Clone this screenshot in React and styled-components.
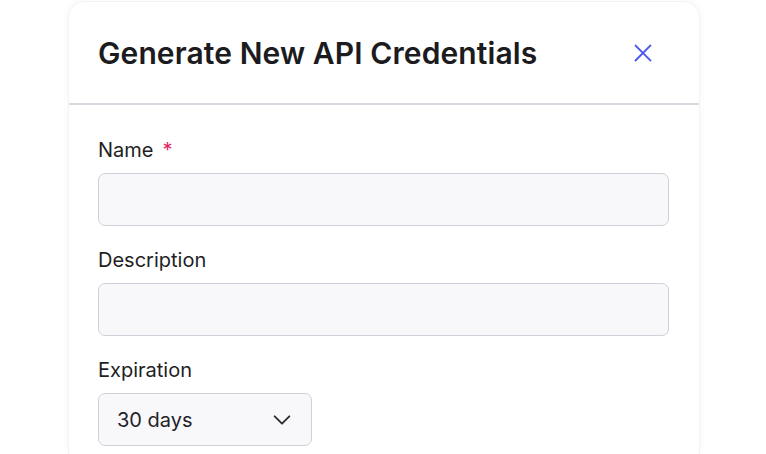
import React from "react";
import styled, { createGlobalStyle } from "styled-components";

const Global = createGlobalStyle`
  html, body { margin: 0; padding: 0; background: #ffffff; }
  body { font-family: Inter, "Noto Sans", sans-serif; -webkit-font-smoothing: antialiased; }
  * { box-sizing: border-box; }
`;

const Page = styled.div`
  display: flex;
  padding: 1px 0 0 68px;
  height: 454px;
  overflow: hidden;
`;

const Card = styled.div`
  width: 632px;
  background: #fff;
  border-radius: 16px 16px 0 0;
  border: 1px solid #f3f3f6;
  border-bottom: none;
  box-shadow: 0 0 8px rgba(20, 20, 40, 0.04);
  display: flex;
  flex-direction: column;
`;

const Header = styled.div`
  flex-shrink: 0;
  height: 103px;
  display: flex;
  align-items: center;
  justify-content: space-between;
  padding: 0 44px 0 29px;
  border-bottom: 2px solid #d7d7df;
`;

const Title = styled.h2`
  margin: 0;
  font-size: 30px;
  font-weight: 600;
  color: #1b1b20;
  letter-spacing: 0.1px;
`;

const CloseButton = styled.button`
  border: none;
  background: none;
  padding: 0;
  width: 24px;
  height: 24px;
  display: flex;
  align-items: center;
  justify-content: center;
  color: #4c55f0;
`;

const Body = styled.div`
  flex-shrink: 0;
  padding: 33px 30px 0 29px;
  display: flex;
  flex-direction: column;
`;

const Field = styled.div`
  display: flex;
  flex-direction: column;
  gap: 11px;
  margin-bottom: 22px;
`;

const Label = styled.label`
  font-size: 20px;
  line-height: 24px;
  color: #1e1e24;
  display: flex;
  gap: 9px;
`;

const Required = styled.span`
  color: #e0265f;
`;

const Input = styled.div`
  flex-shrink: 0;
  height: 53px;
  width: ${(p) => p.$width || "100%"};
  background: #f8f8fa;
  border: 1.5px solid #d0d0da;
  border-radius: 7px;
  display: flex;
  align-items: center;
  justify-content: space-between;
  padding: 0 18px 0 18px;
  font-size: 20px;
  color: #222228;
`;

export default function App() {
  return (
    <>
      <Global />
      <Page>
        <Card>
          <Header>
            <Title>Generate New API Credentials</Title>
            <CloseButton aria-label="Close">
              <svg width="22" height="22" viewBox="0 0 24 24" fill="none" stroke="currentColor" strokeWidth="2" strokeLinecap="square">
                <path d="M4 4L20 20M20 4L4 20" />
              </svg>
            </CloseButton>
          </Header>
          <Body>
            <Field>
              <Label>
                Name <Required>*</Required>
              </Label>
              <Input />
            </Field>
            <Field>
              <Label>Description</Label>
              <Input />
            </Field>
            <Field>
              <Label>Expiration</Label>
              <Input $width="214px">
                <span>30 days</span>
                <svg width="22" height="22" viewBox="0 0 24 24" fill="none" stroke="#2a2a30" strokeWidth="2" strokeLinecap="round" strokeLinejoin="round">
                  <path d="M4 8l8 8 8-8" />
                </svg>
              </Input>
            </Field>
          </Body>
        </Card>
      </Page>
    </>
  );
}
